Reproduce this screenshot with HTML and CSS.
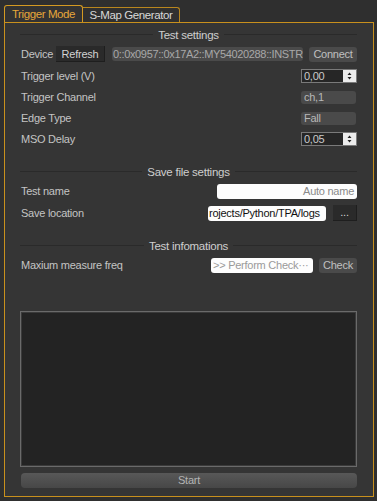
FILE: index.html
```html
<!DOCTYPE html>
<html>
<head>
<meta charset="utf-8">
<link rel="stylesheet" href="styles.css">
</head>
<body>
<div class="tabs">
  <div class="tab active">Trigger Mode</div>
  <div class="tab">S-Map Generator</div>
</div>
<div class="panel">
  <div class="section"><span class="line"></span><span class="stitle">Test settings</span><span class="line"></span></div>
  <div class="row r-device">
    <span class="label dev">Device</span>
    <span class="btn dark refresh">Refresh</span>
    <span class="field gray devfield">0::0x0957::0x17A2::MY54020288::INSTR</span>
    <span class="btn gray connect">Connect</span>
  </div>
  <div class="row r1">
    <span class="label">Trigger level (V)</span>
    <span class="spin"><span class="spinval">0,00</span><span class="arrows"><svg width="13" height="12" viewBox="0 0 13 12"><path d="M4.5 5 L6.5 2.5 L8.5 5 Z M4.5 7 L6.5 9.5 L8.5 7 Z" fill="#222"/></svg></span></span>
  </div>
  <div class="row r2">
    <span class="label">Trigger Channel</span>
    <span class="combo">ch,1</span>
  </div>
  <div class="row r2">
    <span class="label">Edge Type</span>
    <span class="combo">Fall</span>
  </div>
  <div class="row r2">
    <span class="label">MSO Delay</span>
    <span class="spin"><span class="spinval">0,05</span><span class="arrows"><svg width="13" height="12" viewBox="0 0 13 12"><path d="M4.5 5 L6.5 2.5 L8.5 5 Z M4.5 7 L6.5 9.5 L8.5 7 Z" fill="#222"/></svg></span></span>
  </div>

  <div class="section s2"><span class="line"></span><span class="stitle">Save file settings</span><span class="line"></span></div>
  <div class="row r-after">
    <span class="label">Test name</span>
    <span class="white name">Auto name</span>
  </div>
  <div class="row r1">
    <span class="label">Save location</span>
    <span class="white loc">rojects/Python/TPA/logs</span>
    <span class="btn dark dots">...</span>
  </div>

  <div class="section s2"><span class="line"></span><span class="stitle">Test infomations</span><span class="line"></span></div>
  <div class="row r-after">
    <span class="label">Maxium measure freq</span>
    <span class="white perform">&gt;&gt; Perform Check···</span>
    <span class="btn gray check">Check</span>
  </div>

  <div class="log"></div>
  <div class="start">Start</div>
</div>
</body>
</html>
```
FILE: styles.css
```css
* { box-sizing: border-box; }
html, body { margin: 0; padding: 0; }
body {
  width: 377px;
  height: 501px;
  background: #2f2f2f;
  font-family: "Liberation Sans", Arial, sans-serif;
  font-size: 11px;
  letter-spacing: -0.25px;
  color: #c4c4c4;
  overflow: hidden;
}
.tabs {
  display: flex;
  align-items: flex-end;
  height: 22px;
  padding-left: 4px;
}
.tab {
  height: 15px;
  width: 97px;
  padding: 0;
  border: 1px solid #b8861e;
  border-bottom: none;
  border-left: none;
  border-radius: 0 3px 0 0;
  color: #d8d8d8;
  line-height: 14px;
  font-size: 11.5px;
  letter-spacing: -0.4px;
  white-space: nowrap;
  text-align: center;
  background: #303030;
}
.tab.active {
  height: 17px;
  width: 79px;
  color: #e6a73a;
  border-color: #d49a22;
  border-left: 1px solid #d49a22;
  border-radius: 3px 3px 0 0;
  line-height: 17px;
  background: #333;
}
.panel {
  margin-left: 4px;
  width: 370px;
  height: 475px;
  border: 1px solid #c8901d;
  background: #353535;
  padding: 5px 16px 0 15px;
  display: flex;
  flex-direction: column;
}
.section {
  height: 14px;
  display: flex;
  align-items: center;
  gap: 5px;
}
.section.s2 { margin-top: 18px; }
.line {
  flex: 1;
  height: 1px;
  background: #2a2a2a;
  margin-top: -2px;
}
.stitle {
  color: #cecece;
  font-size: 11.5px;
  line-height: 14px;
}
.row {
  height: 16px;
  display: flex;
  align-items: center;
  flex-shrink: 0;
}
.r-device { margin-top: 4px; }
.r1 { margin-top: 6px; }
.r2 { margin-top: 5px; }
.r-after { margin-top: 4px; }
.label {
  flex: 1;
  padding-left: 1px;
  white-space: nowrap;
}
.label.dev { flex: 0 0 36px; }
.btn {
  height: 16px;
  line-height: 16px;
  text-align: center;
  white-space: nowrap;
}
.btn.dark {
  background: #2a2a2a;
  color: #d2d2d2;
  border-right: 1px solid #1e1e1e;
  border-bottom: 1px solid #1e1e1e;
}
.btn.gray {
  background: #4a4a4a;
  color: #c0c0c0;
  border-radius: 3px;
  height: 15px;
  line-height: 15px;
}
.refresh { width: 49px; }
.field.gray {
  width: 191px;
  height: 14px;
  margin: 0 6px 0 7px;
  background: #4a4a4a;
  border-radius: 3px;
  color: #a8a8a8;
  line-height: 14px;
  padding-left: 1px;
  overflow: hidden;
  white-space: nowrap;
  letter-spacing: -0.35px;
}
.connect { width: 48px; }
.spin {
  width: 56px;
  height: 14px;
  border: 1px solid #7a7a7a;
  background: #262626;
  display: flex;
}
.spinval {
  flex: 1;
  line-height: 12px;
  padding-left: 2px;
  color: #cacaca;
}
.arrows {
  width: 13px;
  background: #ececec;
  display: flex;
  align-items: center;
}
.combo {
  width: 55px;
  height: 13px;
  margin-right: 1px;
  background: #4a4a4a;
  border-radius: 3px;
  color: #b8b8b8;
  line-height: 13px;
  padding-left: 3px;
}
.white {
  background: #fdfdfd;
  border-radius: 3px;
  height: 15px;
  line-height: 15px;
  white-space: nowrap;
  overflow: hidden;
}
.name {
  width: 140px;
  color: #8a8a8a;
  text-align: right;
  padding-right: 3px;
}
.loc {
  width: 118px;
  color: #111;
  padding-left: 1px;
  margin-right: 7px;
}
.dots { width: 24px; color: #bbb; line-height: 14px; }
.perform {
  width: 102px;
  color: #9a9a9a;
  padding-left: 2px;
  margin-right: 6px;
}
.check { width: 38px; height: 14px; line-height: 14px; }
.log {
  margin-top: 38px;
  height: 156px;
  flex-shrink: 0;
  background: #232323;
  border: 1px solid #6a6a6a;
  box-shadow: inset 0 0 0 1px #3a3a3a;
}
.start {
  margin-top: 6px;
  margin-left: 1px;
  height: 15px;
  flex-shrink: 0;
  border-radius: 4px;
  background: linear-gradient(#585858, #474747);
  color: #b4b4b4;
  text-align: center;
  line-height: 15px;
}
```
